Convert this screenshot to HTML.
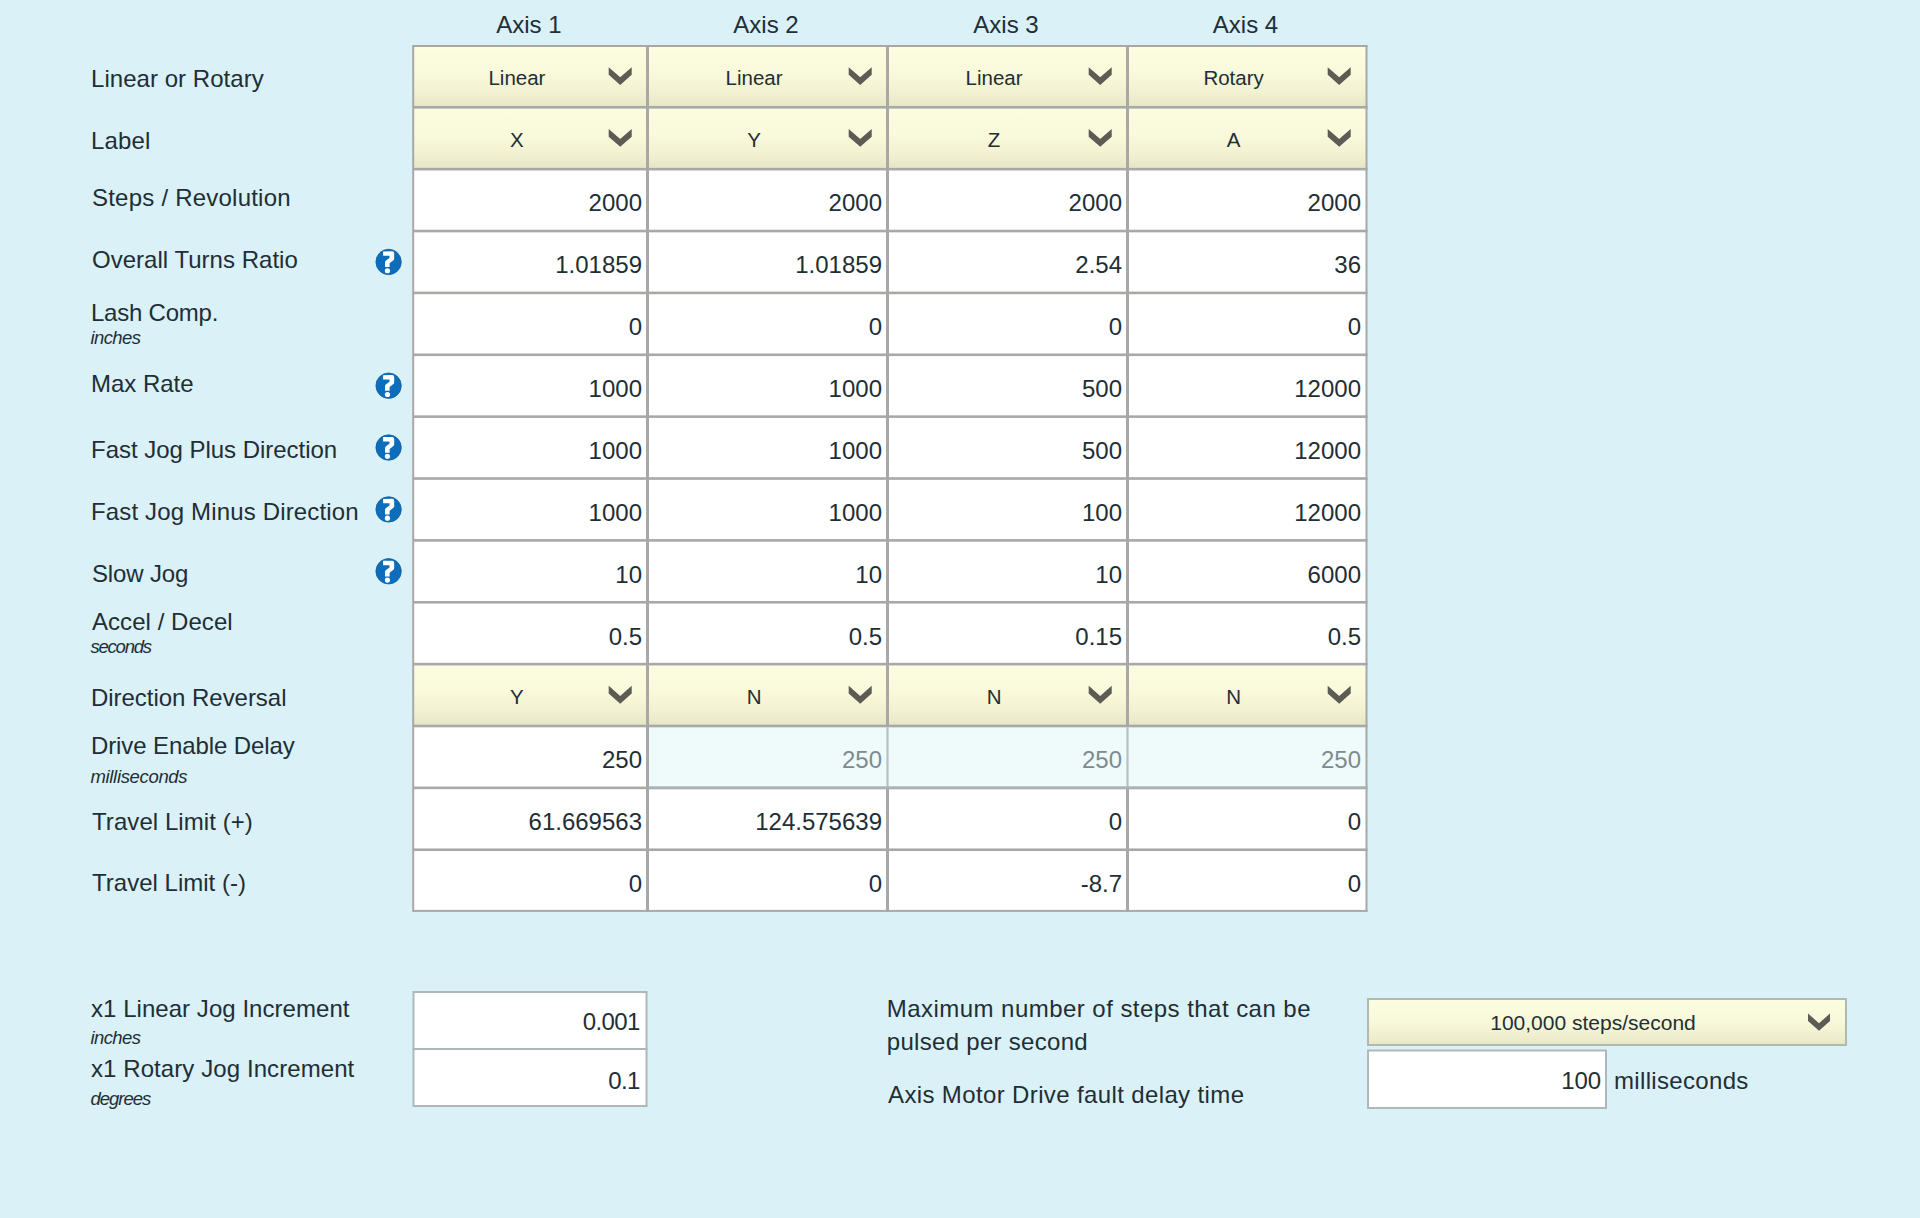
<!DOCTYPE html>
<html><head><meta charset="utf-8"><title>Axis Configuration</title>
<style>
html,body{margin:0;padding:0;}
body{width:1920px;height:1218px;background:#daf1f7;position:relative;overflow:hidden;font-family:"Liberation Sans", sans-serif;}
svg.g{position:absolute;left:0;top:0;}
.t{position:absolute;white-space:nowrap;}
</style></head><body>
<svg class="g" width="1920" height="1218" viewBox="0 0 1920 1218">
<defs>
<linearGradient id="yg" x1="0" y1="0" x2="0" y2="1">
<stop offset="0" stop-color="#fcfde1"/><stop offset="0.45" stop-color="#f9f9db"/><stop offset="0.75" stop-color="#f2f1d2"/><stop offset="1" stop-color="#e6e5c4"/>
</linearGradient>
<linearGradient id="yg2" x1="0" y1="0" x2="0" y2="1">
<stop offset="0" stop-color="#fcfde0"/><stop offset="0.5" stop-color="#f8f9da"/><stop offset="0.8" stop-color="#f0efcf"/><stop offset="1" stop-color="#e7e6c5"/>
</linearGradient>
</defs>
<rect x="413.2" y="46.00" width="234.30" height="61.30" fill="url(#yg)"/>
<rect x="647.5" y="46.00" width="240.00" height="61.30" fill="url(#yg)"/>
<rect x="887.5" y="46.00" width="240.00" height="61.30" fill="url(#yg)"/>
<rect x="1127.5" y="46.00" width="239.00" height="61.30" fill="url(#yg)"/>
<rect x="413.2" y="107.30" width="234.30" height="61.87" fill="url(#yg)"/>
<rect x="647.5" y="107.30" width="240.00" height="61.87" fill="url(#yg)"/>
<rect x="887.5" y="107.30" width="240.00" height="61.87" fill="url(#yg)"/>
<rect x="1127.5" y="107.30" width="239.00" height="61.87" fill="url(#yg)"/>
<rect x="413.2" y="169.17" width="234.30" height="61.87" fill="#ffffff"/>
<rect x="647.5" y="169.17" width="240.00" height="61.87" fill="#ffffff"/>
<rect x="887.5" y="169.17" width="240.00" height="61.87" fill="#ffffff"/>
<rect x="1127.5" y="169.17" width="239.00" height="61.87" fill="#ffffff"/>
<rect x="413.2" y="231.04" width="234.30" height="61.87" fill="#ffffff"/>
<rect x="647.5" y="231.04" width="240.00" height="61.87" fill="#ffffff"/>
<rect x="887.5" y="231.04" width="240.00" height="61.87" fill="#ffffff"/>
<rect x="1127.5" y="231.04" width="239.00" height="61.87" fill="#ffffff"/>
<rect x="413.2" y="292.91" width="234.30" height="61.87" fill="#ffffff"/>
<rect x="647.5" y="292.91" width="240.00" height="61.87" fill="#ffffff"/>
<rect x="887.5" y="292.91" width="240.00" height="61.87" fill="#ffffff"/>
<rect x="1127.5" y="292.91" width="239.00" height="61.87" fill="#ffffff"/>
<rect x="413.2" y="354.78" width="234.30" height="61.87" fill="#ffffff"/>
<rect x="647.5" y="354.78" width="240.00" height="61.87" fill="#ffffff"/>
<rect x="887.5" y="354.78" width="240.00" height="61.87" fill="#ffffff"/>
<rect x="1127.5" y="354.78" width="239.00" height="61.87" fill="#ffffff"/>
<rect x="413.2" y="416.65" width="234.30" height="61.87" fill="#ffffff"/>
<rect x="647.5" y="416.65" width="240.00" height="61.87" fill="#ffffff"/>
<rect x="887.5" y="416.65" width="240.00" height="61.87" fill="#ffffff"/>
<rect x="1127.5" y="416.65" width="239.00" height="61.87" fill="#ffffff"/>
<rect x="413.2" y="478.52" width="234.30" height="61.87" fill="#ffffff"/>
<rect x="647.5" y="478.52" width="240.00" height="61.87" fill="#ffffff"/>
<rect x="887.5" y="478.52" width="240.00" height="61.87" fill="#ffffff"/>
<rect x="1127.5" y="478.52" width="239.00" height="61.87" fill="#ffffff"/>
<rect x="413.2" y="540.39" width="234.30" height="61.87" fill="#ffffff"/>
<rect x="647.5" y="540.39" width="240.00" height="61.87" fill="#ffffff"/>
<rect x="887.5" y="540.39" width="240.00" height="61.87" fill="#ffffff"/>
<rect x="1127.5" y="540.39" width="239.00" height="61.87" fill="#ffffff"/>
<rect x="413.2" y="602.26" width="234.30" height="61.87" fill="#ffffff"/>
<rect x="647.5" y="602.26" width="240.00" height="61.87" fill="#ffffff"/>
<rect x="887.5" y="602.26" width="240.00" height="61.87" fill="#ffffff"/>
<rect x="1127.5" y="602.26" width="239.00" height="61.87" fill="#ffffff"/>
<rect x="413.2" y="664.13" width="234.30" height="61.87" fill="url(#yg)"/>
<rect x="647.5" y="664.13" width="240.00" height="61.87" fill="url(#yg)"/>
<rect x="887.5" y="664.13" width="240.00" height="61.87" fill="url(#yg)"/>
<rect x="1127.5" y="664.13" width="239.00" height="61.87" fill="url(#yg)"/>
<rect x="413.2" y="726.00" width="234.30" height="61.87" fill="#ffffff"/>
<rect x="647.5" y="726.00" width="240.00" height="61.87" fill="#effafa"/>
<rect x="887.5" y="726.00" width="240.00" height="61.87" fill="#effafa"/>
<rect x="1127.5" y="726.00" width="239.00" height="61.87" fill="#effafa"/>
<rect x="413.2" y="787.87" width="234.30" height="61.87" fill="#ffffff"/>
<rect x="647.5" y="787.87" width="240.00" height="61.87" fill="#ffffff"/>
<rect x="887.5" y="787.87" width="240.00" height="61.87" fill="#ffffff"/>
<rect x="1127.5" y="787.87" width="239.00" height="61.87" fill="#ffffff"/>
<rect x="413.2" y="849.74" width="234.30" height="61.16" fill="#ffffff"/>
<rect x="647.5" y="849.74" width="240.00" height="61.16" fill="#ffffff"/>
<rect x="887.5" y="849.74" width="240.00" height="61.16" fill="#ffffff"/>
<rect x="1127.5" y="849.74" width="239.00" height="61.16" fill="#ffffff"/>
<rect x="413.2" y="45.00" width="954.3" height="2" fill="#a8a8a6"/>
<rect x="413.2" y="106.00" width="954.3" height="2.6" fill="#a8a8a6"/>
<rect x="413.2" y="167.87" width="954.3" height="2.6" fill="#a8a8a6"/>
<rect x="413.2" y="229.74" width="954.3" height="2.6" fill="#a8a8a6"/>
<rect x="413.2" y="291.61" width="954.3" height="2.6" fill="#a8a8a6"/>
<rect x="413.2" y="353.48" width="954.3" height="2.6" fill="#a8a8a6"/>
<rect x="413.2" y="415.35" width="954.3" height="2.6" fill="#a8a8a6"/>
<rect x="413.2" y="477.22" width="954.3" height="2.6" fill="#a8a8a6"/>
<rect x="413.2" y="539.09" width="954.3" height="2.6" fill="#a8a8a6"/>
<rect x="413.2" y="600.96" width="954.3" height="2.6" fill="#a8a8a6"/>
<rect x="413.2" y="662.83" width="954.3" height="2.6" fill="#a8a8a6"/>
<rect x="413.2" y="724.70" width="954.3" height="2.6" fill="#a8a8a6"/>
<rect x="413.2" y="786.57" width="954.3" height="2.6" fill="#a8a8a6"/>
<rect x="413.2" y="848.44" width="954.3" height="2.6" fill="#a8a8a6"/>
<rect x="413.2" y="909.90" width="954.3" height="2" fill="#a8a8a6"/>
<rect x="412.20" y="45.0" width="2" height="866.90" fill="#a8a8a6"/>
<rect x="646.00" y="45.0" width="3" height="866.90" fill="#a8a8a6"/>
<rect x="886.00" y="45.0" width="3" height="866.90" fill="#a8a8a6"/>
<rect x="1126.00" y="45.0" width="3" height="866.90" fill="#a8a8a6"/>
<rect x="1365.50" y="45.0" width="2" height="866.90" fill="#a8a8a6"/>
<rect x="886.00" y="727.30" width="3" height="59.27" fill="#effafa"/>
<rect x="886.40" y="727.30" width="2.2" height="59.27" fill="#b4c0c3"/>
<rect x="1126.00" y="727.30" width="3" height="59.27" fill="#effafa"/>
<rect x="1126.40" y="727.30" width="2.2" height="59.27" fill="#b4c0c3"/>
<rect x="649.00" y="786.57" width="717.50" height="2.6" fill="#a9b3b6"/>
<circle cx="388.60" cy="261.94" r="12.7" fill="#0b6dbb" stroke="#1a5f9c" stroke-width="0.8"/>
<path transform="translate(388.60 261.94)" fill="#fff" d="M-5.5,-10.5 L3.6,-10.6 Q5.6,-10.6 5.6,-8.4 L5.6,-3.2 Q5.6,-2.2 4.8,-1.6 L1.0,1.4 L1.0,5.1 L-3.6,5.1 L-3.6,0.6 Q-3.6,-0.6 -2.6,-1.4 L0.9,-3.9 L0.9,-6.1 L-5.5,-6.1 Z"/>
<circle cx="387.45" cy="270.74" r="2.6" fill="#fff"/>
<circle cx="388.60" cy="385.68" r="12.7" fill="#0b6dbb" stroke="#1a5f9c" stroke-width="0.8"/>
<path transform="translate(388.60 385.68)" fill="#fff" d="M-5.5,-10.5 L3.6,-10.6 Q5.6,-10.6 5.6,-8.4 L5.6,-3.2 Q5.6,-2.2 4.8,-1.6 L1.0,1.4 L1.0,5.1 L-3.6,5.1 L-3.6,0.6 Q-3.6,-0.6 -2.6,-1.4 L0.9,-3.9 L0.9,-6.1 L-5.5,-6.1 Z"/>
<circle cx="387.45" cy="394.48" r="2.6" fill="#fff"/>
<circle cx="388.60" cy="447.55" r="12.7" fill="#0b6dbb" stroke="#1a5f9c" stroke-width="0.8"/>
<path transform="translate(388.60 447.55)" fill="#fff" d="M-5.5,-10.5 L3.6,-10.6 Q5.6,-10.6 5.6,-8.4 L5.6,-3.2 Q5.6,-2.2 4.8,-1.6 L1.0,1.4 L1.0,5.1 L-3.6,5.1 L-3.6,0.6 Q-3.6,-0.6 -2.6,-1.4 L0.9,-3.9 L0.9,-6.1 L-5.5,-6.1 Z"/>
<circle cx="387.45" cy="456.35" r="2.6" fill="#fff"/>
<circle cx="388.60" cy="509.42" r="12.7" fill="#0b6dbb" stroke="#1a5f9c" stroke-width="0.8"/>
<path transform="translate(388.60 509.42)" fill="#fff" d="M-5.5,-10.5 L3.6,-10.6 Q5.6,-10.6 5.6,-8.4 L5.6,-3.2 Q5.6,-2.2 4.8,-1.6 L1.0,1.4 L1.0,5.1 L-3.6,5.1 L-3.6,0.6 Q-3.6,-0.6 -2.6,-1.4 L0.9,-3.9 L0.9,-6.1 L-5.5,-6.1 Z"/>
<circle cx="387.45" cy="518.22" r="2.6" fill="#fff"/>
<circle cx="388.60" cy="571.29" r="12.7" fill="#0b6dbb" stroke="#1a5f9c" stroke-width="0.8"/>
<path transform="translate(388.60 571.29)" fill="#fff" d="M-5.5,-10.5 L3.6,-10.6 Q5.6,-10.6 5.6,-8.4 L5.6,-3.2 Q5.6,-2.2 4.8,-1.6 L1.0,1.4 L1.0,5.1 L-3.6,5.1 L-3.6,0.6 Q-3.6,-0.6 -2.6,-1.4 L0.9,-3.9 L0.9,-6.1 L-5.5,-6.1 Z"/>
<circle cx="387.45" cy="580.09" r="2.6" fill="#fff"/>
<polygon points="608.70,67.13 620.20,77.23 631.70,67.13 631.70,74.83 620.20,84.93 608.70,74.83" fill="#5c5b54"/>
<polygon points="848.70,67.13 860.20,77.23 871.70,67.13 871.70,74.83 860.20,84.93 848.70,74.83" fill="#5c5b54"/>
<polygon points="1088.70,67.13 1100.20,77.23 1111.70,67.13 1111.70,74.83 1100.20,84.93 1088.70,74.83" fill="#5c5b54"/>
<polygon points="1327.70,67.13 1339.20,77.23 1350.70,67.13 1350.70,74.83 1339.20,84.93 1327.70,74.83" fill="#5c5b54"/>
<polygon points="608.70,129.00 620.20,139.10 631.70,129.00 631.70,136.70 620.20,146.80 608.70,136.70" fill="#5c5b54"/>
<polygon points="848.70,129.00 860.20,139.10 871.70,129.00 871.70,136.70 860.20,146.80 848.70,136.70" fill="#5c5b54"/>
<polygon points="1088.70,129.00 1100.20,139.10 1111.70,129.00 1111.70,136.70 1100.20,146.80 1088.70,136.70" fill="#5c5b54"/>
<polygon points="1327.70,129.00 1339.20,139.10 1350.70,129.00 1350.70,136.70 1339.20,146.80 1327.70,136.70" fill="#5c5b54"/>
<polygon points="608.70,685.83 620.20,695.93 631.70,685.83 631.70,693.53 620.20,703.63 608.70,693.53" fill="#5c5b54"/>
<polygon points="848.70,685.83 860.20,695.93 871.70,685.83 871.70,693.53 860.20,703.63 848.70,693.53" fill="#5c5b54"/>
<polygon points="1088.70,685.83 1100.20,695.93 1111.70,685.83 1111.70,693.53 1100.20,703.63 1088.70,693.53" fill="#5c5b54"/>
<polygon points="1327.70,685.83 1339.20,695.93 1350.70,685.83 1350.70,693.53 1339.20,703.63 1327.70,693.53" fill="#5c5b54"/>
<rect x="413.5" y="992" width="233" height="57" fill="#fff" stroke="#b0b7ba" stroke-width="2"/>
<rect x="413.5" y="1049" width="233" height="57" fill="#fff" stroke="#b0b7ba" stroke-width="2"/>
<rect x="1368" y="999" width="478" height="46" fill="url(#yg2)" stroke="#b0b8b2" stroke-width="2"/>
<polygon points="1808.00,1013.50 1819.00,1023.20 1830.00,1013.50 1830.00,1021.00 1819.00,1030.70 1808.00,1021.00" fill="#5c5b54"/>
<rect x="1368" y="1050.5" width="238" height="57.5" fill="#fff" stroke="#b0b7ba" stroke-width="2"/>
</svg>
<div class="t" id="t0" style="top:0.88px;font-size:24px;line-height:48px;color:#222e35;left:228.85px;width:600px;text-align:center;">Axis 1</div>
<div class="t" id="t1" style="top:0.88px;font-size:24px;line-height:48px;color:#222e35;left:466.00px;width:600px;text-align:center;">Axis 2</div>
<div class="t" id="t2" style="top:0.88px;font-size:24px;line-height:48px;color:#222e35;left:706.00px;width:600px;text-align:center;">Axis 3</div>
<div class="t" id="t3" style="top:0.88px;font-size:24px;line-height:48px;color:#222e35;left:945.50px;width:600px;text-align:center;">Axis 4</div>
<div class="t" id="L0" style="top:54.88px;font-size:24px;line-height:48px;color:#222e35;left:91.00px;letter-spacing:0.040px;">Linear or Rotary</div>
<div class="t" id="L1" style="top:116.68px;font-size:24px;line-height:48px;color:#222e35;left:91.00px;letter-spacing:0.124px;">Label</div>
<div class="t" id="L2" style="top:173.68px;font-size:24px;line-height:48px;color:#222e35;left:92.00px;letter-spacing:0.223px;">Steps / Revolution</div>
<div class="t" id="L3" style="top:235.88px;font-size:24px;line-height:48px;color:#222e35;left:92.00px;letter-spacing:0.022px;">Overall Turns Ratio</div>
<div class="t" id="L4" style="top:288.88px;font-size:24px;line-height:48px;color:#222e35;left:91.00px;letter-spacing:-0.223px;">Lash Comp.</div>
<div class="t" id="S4" style="top:318.59px;font-size:18.5px;line-height:37.0px;color:#222e35;font-style:italic;left:90.50px;letter-spacing:-0.600px;">inches</div>
<div class="t" id="L5" style="top:359.88px;font-size:24px;line-height:48px;color:#222e35;left:91.00px;letter-spacing:-0.029px;">Max Rate</div>
<div class="t" id="L6" style="top:425.88px;font-size:24px;line-height:48px;color:#222e35;left:91.00px;letter-spacing:-0.027px;">Fast Jog Plus Direction</div>
<div class="t" id="L7" style="top:487.88px;font-size:24px;line-height:48px;color:#222e35;left:91.00px;letter-spacing:0.156px;">Fast Jog Minus Direction</div>
<div class="t" id="L8" style="top:549.88px;font-size:24px;line-height:48px;color:#222e35;left:92.00px;letter-spacing:-0.143px;">Slow Jog</div>
<div class="t" id="L9" style="top:597.88px;font-size:24px;line-height:48px;color:#222e35;left:92.00px;letter-spacing:0.050px;">Accel / Decel</div>
<div class="t" id="S9" style="top:627.99px;font-size:18.5px;line-height:37.0px;color:#222e35;font-style:italic;left:90.50px;letter-spacing:-1.233px;">seconds</div>
<div class="t" id="L10" style="top:673.88px;font-size:24px;line-height:48px;color:#222e35;left:91.00px;letter-spacing:-0.035px;">Direction Reversal</div>
<div class="t" id="L11" style="top:721.88px;font-size:24px;line-height:48px;color:#222e35;left:91.00px;letter-spacing:-0.106px;">Drive Enable Delay</div>
<div class="t" id="S11" style="top:757.99px;font-size:18.5px;line-height:37.0px;color:#222e35;font-style:italic;left:90.50px;letter-spacing:-0.336px;">milliseconds</div>
<div class="t" id="L12" style="top:797.88px;font-size:24px;line-height:48px;color:#222e35;left:92.00px;letter-spacing:0.067px;">Travel Limit (+)</div>
<div class="t" id="L13" style="top:858.88px;font-size:24px;line-height:48px;color:#222e35;left:92.00px;letter-spacing:0.014px;">Travel Limit (-)</div>
<div class="t" id="t21" style="top:57.33px;font-size:20.5px;line-height:41.0px;color:#222e35;left:216.95px;width:600px;text-align:center;">Linear</div>
<div class="t" id="t22" style="top:57.33px;font-size:20.5px;line-height:41.0px;color:#222e35;left:454.10px;width:600px;text-align:center;">Linear</div>
<div class="t" id="t23" style="top:57.33px;font-size:20.5px;line-height:41.0px;color:#222e35;left:694.10px;width:600px;text-align:center;">Linear</div>
<div class="t" id="t24" style="top:57.33px;font-size:20.5px;line-height:41.0px;color:#222e35;left:933.60px;width:600px;text-align:center;">Rotary</div>
<div class="t" id="t25" style="top:119.20px;font-size:20.5px;line-height:41.0px;color:#222e35;left:216.95px;width:600px;text-align:center;">X</div>
<div class="t" id="t26" style="top:119.20px;font-size:20.5px;line-height:41.0px;color:#222e35;left:454.10px;width:600px;text-align:center;">Y</div>
<div class="t" id="t27" style="top:119.20px;font-size:20.5px;line-height:41.0px;color:#222e35;left:694.10px;width:600px;text-align:center;">Z</div>
<div class="t" id="t28" style="top:119.20px;font-size:20.5px;line-height:41.0px;color:#222e35;left:933.60px;width:600px;text-align:center;">A</div>
<div class="t" id="t29" style="top:179.45px;font-size:24px;line-height:48px;color:#222e35;right:1278.00px;text-align:right;">2000</div>
<div class="t" id="t30" style="top:179.45px;font-size:24px;line-height:48px;color:#222e35;right:1038.00px;text-align:right;">2000</div>
<div class="t" id="t31" style="top:179.45px;font-size:24px;line-height:48px;color:#222e35;right:798.00px;text-align:right;">2000</div>
<div class="t" id="t32" style="top:179.45px;font-size:24px;line-height:48px;color:#222e35;right:559.00px;text-align:right;">2000</div>
<div class="t" id="t33" style="top:241.32px;font-size:24px;line-height:48px;color:#222e35;right:1278.00px;text-align:right;">1.01859</div>
<div class="t" id="t34" style="top:241.32px;font-size:24px;line-height:48px;color:#222e35;right:1038.00px;text-align:right;">1.01859</div>
<div class="t" id="t35" style="top:241.32px;font-size:24px;line-height:48px;color:#222e35;right:798.00px;text-align:right;">2.54</div>
<div class="t" id="t36" style="top:241.32px;font-size:24px;line-height:48px;color:#222e35;right:559.00px;text-align:right;">36</div>
<div class="t" id="t37" style="top:303.19px;font-size:24px;line-height:48px;color:#222e35;right:1278.00px;text-align:right;">0</div>
<div class="t" id="t38" style="top:303.19px;font-size:24px;line-height:48px;color:#222e35;right:1038.00px;text-align:right;">0</div>
<div class="t" id="t39" style="top:303.19px;font-size:24px;line-height:48px;color:#222e35;right:798.00px;text-align:right;">0</div>
<div class="t" id="t40" style="top:303.19px;font-size:24px;line-height:48px;color:#222e35;right:559.00px;text-align:right;">0</div>
<div class="t" id="t41" style="top:365.06px;font-size:24px;line-height:48px;color:#222e35;right:1278.00px;text-align:right;">1000</div>
<div class="t" id="t42" style="top:365.06px;font-size:24px;line-height:48px;color:#222e35;right:1038.00px;text-align:right;">1000</div>
<div class="t" id="t43" style="top:365.06px;font-size:24px;line-height:48px;color:#222e35;right:798.00px;text-align:right;">500</div>
<div class="t" id="t44" style="top:365.06px;font-size:24px;line-height:48px;color:#222e35;right:559.00px;text-align:right;">12000</div>
<div class="t" id="t45" style="top:426.93px;font-size:24px;line-height:48px;color:#222e35;right:1278.00px;text-align:right;">1000</div>
<div class="t" id="t46" style="top:426.93px;font-size:24px;line-height:48px;color:#222e35;right:1038.00px;text-align:right;">1000</div>
<div class="t" id="t47" style="top:426.93px;font-size:24px;line-height:48px;color:#222e35;right:798.00px;text-align:right;">500</div>
<div class="t" id="t48" style="top:426.93px;font-size:24px;line-height:48px;color:#222e35;right:559.00px;text-align:right;">12000</div>
<div class="t" id="t49" style="top:488.80px;font-size:24px;line-height:48px;color:#222e35;right:1278.00px;text-align:right;">1000</div>
<div class="t" id="t50" style="top:488.80px;font-size:24px;line-height:48px;color:#222e35;right:1038.00px;text-align:right;">1000</div>
<div class="t" id="t51" style="top:488.80px;font-size:24px;line-height:48px;color:#222e35;right:798.00px;text-align:right;">100</div>
<div class="t" id="t52" style="top:488.80px;font-size:24px;line-height:48px;color:#222e35;right:559.00px;text-align:right;">12000</div>
<div class="t" id="t53" style="top:550.67px;font-size:24px;line-height:48px;color:#222e35;right:1278.00px;text-align:right;">10</div>
<div class="t" id="t54" style="top:550.67px;font-size:24px;line-height:48px;color:#222e35;right:1038.00px;text-align:right;">10</div>
<div class="t" id="t55" style="top:550.67px;font-size:24px;line-height:48px;color:#222e35;right:798.00px;text-align:right;">10</div>
<div class="t" id="t56" style="top:550.67px;font-size:24px;line-height:48px;color:#222e35;right:559.00px;text-align:right;">6000</div>
<div class="t" id="t57" style="top:612.54px;font-size:24px;line-height:48px;color:#222e35;right:1278.00px;text-align:right;">0.5</div>
<div class="t" id="t58" style="top:612.54px;font-size:24px;line-height:48px;color:#222e35;right:1038.00px;text-align:right;">0.5</div>
<div class="t" id="t59" style="top:612.54px;font-size:24px;line-height:48px;color:#222e35;right:798.00px;text-align:right;">0.15</div>
<div class="t" id="t60" style="top:612.54px;font-size:24px;line-height:48px;color:#222e35;right:559.00px;text-align:right;">0.5</div>
<div class="t" id="t61" style="top:676.03px;font-size:20.5px;line-height:41.0px;color:#222e35;left:216.95px;width:600px;text-align:center;">Y</div>
<div class="t" id="t62" style="top:676.03px;font-size:20.5px;line-height:41.0px;color:#222e35;left:454.10px;width:600px;text-align:center;">N</div>
<div class="t" id="t63" style="top:676.03px;font-size:20.5px;line-height:41.0px;color:#222e35;left:694.10px;width:600px;text-align:center;">N</div>
<div class="t" id="t64" style="top:676.03px;font-size:20.5px;line-height:41.0px;color:#222e35;left:933.60px;width:600px;text-align:center;">N</div>
<div class="t" id="t65" style="top:736.28px;font-size:24px;line-height:48px;color:#222e35;right:1278.00px;text-align:right;">250</div>
<div class="t" id="t66" style="top:736.28px;font-size:24px;line-height:48px;color:#7d8b90;right:1038.00px;text-align:right;">250</div>
<div class="t" id="t67" style="top:736.28px;font-size:24px;line-height:48px;color:#7d8b90;right:798.00px;text-align:right;">250</div>
<div class="t" id="t68" style="top:736.28px;font-size:24px;line-height:48px;color:#7d8b90;right:559.00px;text-align:right;">250</div>
<div class="t" id="t69" style="top:798.15px;font-size:24px;line-height:48px;color:#222e35;right:1278.00px;text-align:right;">61.669563</div>
<div class="t" id="t70" style="top:798.15px;font-size:24px;line-height:48px;color:#222e35;right:1038.00px;text-align:right;">124.575639</div>
<div class="t" id="t71" style="top:798.15px;font-size:24px;line-height:48px;color:#222e35;right:798.00px;text-align:right;">0</div>
<div class="t" id="t72" style="top:798.15px;font-size:24px;line-height:48px;color:#222e35;right:559.00px;text-align:right;">0</div>
<div class="t" id="t73" style="top:860.02px;font-size:24px;line-height:48px;color:#222e35;right:1278.00px;text-align:right;">0</div>
<div class="t" id="t74" style="top:860.02px;font-size:24px;line-height:48px;color:#222e35;right:1038.00px;text-align:right;">0</div>
<div class="t" id="t75" style="top:860.02px;font-size:24px;line-height:48px;color:#222e35;right:798.00px;text-align:right;">-8.7</div>
<div class="t" id="t76" style="top:860.02px;font-size:24px;line-height:48px;color:#222e35;right:559.00px;text-align:right;">0</div>
<div class="t" id="B0" style="top:984.68px;font-size:24px;line-height:48px;color:#222e35;left:91.00px;letter-spacing:0.045px;">x1 Linear Jog Increment</div>
<div class="t" id="B1" style="top:1019.29px;font-size:18.5px;line-height:37.0px;color:#222e35;font-style:italic;left:90.50px;letter-spacing:-0.600px;">inches</div>
<div class="t" id="B2" style="top:1044.68px;font-size:24px;line-height:48px;color:#222e35;left:91.00px;letter-spacing:0.082px;">x1 Rotary Jog Increment</div>
<div class="t" id="B3" style="top:1079.69px;font-size:18.5px;line-height:37.0px;color:#222e35;font-style:italic;left:90.50px;letter-spacing:-1.017px;">degrees</div>
<div class="t" id="t81" style="top:998.08px;font-size:24px;line-height:48px;color:#222e35;right:1280.20px;text-align:right;letter-spacing:-0.6px;">0.001</div>
<div class="t" id="t82" style="top:1056.68px;font-size:24px;line-height:48px;color:#222e35;right:1280.20px;text-align:right;letter-spacing:-0.6px;">0.1</div>
<div class="t" id="B4" style="top:984.88px;font-size:24px;line-height:48px;color:#222e35;left:886.80px;letter-spacing:0.456px;">Maximum number of steps that can be</div>
<div class="t" id="B5" style="top:1017.88px;font-size:24px;line-height:48px;color:#222e35;left:886.80px;letter-spacing:0.294px;">pulsed per second</div>
<div class="t" id="B6" style="top:1070.88px;font-size:24px;line-height:48px;color:#222e35;left:888.00px;letter-spacing:0.371px;">Axis Motor Drive fault delay time</div>
<div class="t" id="t86" style="top:1002.42px;font-size:21px;line-height:42px;color:#222e35;left:1293.00px;width:600px;text-align:center;">100,000 steps/second</div>
<div class="t" id="t87" style="top:1056.98px;font-size:24px;line-height:48px;color:#222e35;right:318.80px;text-align:right;">100</div>
<div class="t" id="B7" style="top:1056.98px;font-size:24px;line-height:48px;color:#222e35;left:1614.00px;letter-spacing:0.327px;">milliseconds</div>
</body></html>
